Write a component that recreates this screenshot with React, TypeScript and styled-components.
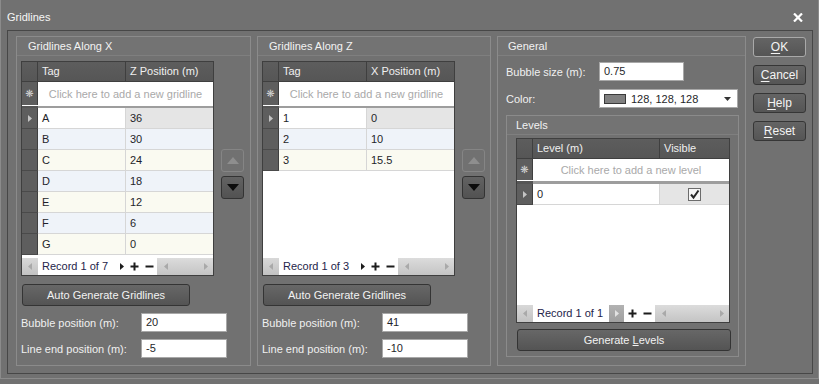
import React from 'react';
import styled, { createGlobalStyle } from 'styled-components';

const GlobalStyle = createGlobalStyle`
  html, body {
    margin: 0;
    padding: 0;
    background: #717171;
  }
  body {
    font-family: "Liberation Sans", Arial, sans-serif;
    font-size: 11px;
    color: #f2f2f2;
  }
`;

const bg = '#717171';
const lightLine = '#8b8b8b';
const darkLine = '#3f3f3f';
const cellLine = '#d6d6d6';
const cellText = '#1f1f2a';

const Window = styled.div`
  width: 819px;
  height: 379px;
  box-sizing: border-box;
  border: 1px solid ${lightLine};
  border-top: none;
  background: ${bg};
  display: flex;
  flex-direction: column;
`;

const TitleBar = styled.div`
  height: 30px;
  display: flex;
  align-items: center;
  justify-content: space-between;
  padding: 0 15px 0 6px;
  flex: none;
`;

const Title = styled.span`
  font-size: 11px;
  color: #f6f6f6;
  margin-top: 3px;
`;

const CloseWrap = styled.div`
  margin-top: 4px;
  display: flex;
`;

const Frame = styled.div`
  margin-left: 6px;
  width: 806px;
  height: 344px;
  box-sizing: border-box;
  border: 1px solid #474747;
  padding: 5px 0 0 8px;
  display: flex;
  align-items: flex-start;
`;

const Panel = styled.div<{ $width: number; $height: number; $gap?: number }>`
  width: ${(p) => p.$width}px;
  height: ${(p) => p.$height}px;
  margin-right: ${(p) => p.$gap ?? 0}px;
  box-sizing: border-box;
  border: 1px solid ${lightLine};
  display: flex;
  flex-direction: column;
  flex: none;
`;

const PanelHeader = styled.div<{ $pad?: number }>`
  height: 18px;
  line-height: 18px;
  padding-left: ${(p) => p.$pad ?? 11}px;
  border-bottom: 1px solid #7f7f7f;
  background: #737373;
  color: #f2f2f2;
  flex: none;
`;

const PanelBody = styled.div<{ $pad: string }>`
  padding: ${(p) => p.$pad};
  display: flex;
  flex-direction: column;
  align-items: flex-start;
`;

const GridArea = styled.div`
  display: flex;
  align-items: flex-start;
  gap: 7px;
`;

const MoveColumn = styled.div`
  margin-top: 88px;
  display: flex;
  flex-direction: column;
  gap: 4px;
`;

const MoveButton = styled.div<{ $enabled?: boolean }>`
  width: 23px;
  height: 23px;
  box-sizing: border-box;
  border-radius: 3px;
  border: 1px solid ${(p) => (p.$enabled ? '#333' : '#858585')};
  background: ${(p) => (p.$enabled ? 'linear-gradient(#626262, #525252)' : bg)};
  display: flex;
  align-items: center;
  justify-content: center;
`;

const GridBox = styled.div<{ $width: number; $height: number }>`
  width: ${(p) => p.$width}px;
  height: ${(p) => p.$height}px;
  box-sizing: border-box;
  border: 1px solid ${darkLine};
  display: flex;
  flex-direction: column;
  background: #fff;
  flex: none;
`;

const GridHeader = styled.div`
  height: 19px;
  display: flex;
  background: linear-gradient(#5d5d5d, #565656);
  border-bottom: 1px solid ${darkLine};
  flex: none;
`;

const HeaderCell = styled.div<{ $width?: number }>`
  ${(p) => (p.$width ? `width: ${p.$width}px; flex: none;` : 'flex: 1;')}
  box-sizing: border-box;
  border-right: 1px solid ${darkLine};
  padding-left: 4px;
  line-height: 19px;
  color: #f0f0f0;
  white-space: nowrap;
  &:last-child {
    border-right: none;
  }
`;

const Row = styled.div<{ $height: number; $line?: string }>`
  height: ${(p) => p.$height}px;
  display: flex;
  flex: none;
  box-sizing: border-box;
  border-bottom: 1px solid ${(p) => p.$line ?? cellLine};
`;

const Selector = styled.div`
  width: 16px;
  flex: none;
  box-sizing: border-box;
  background: #5e5e5e;
  border-right: 1px solid ${darkLine};
  display: flex;
  align-items: center;
  justify-content: center;
  color: #d4d4d4;
  font-family: "DejaVu Sans", sans-serif;
  font-size: 10px;
`;

const SelectorWrap = styled.div`
  width: 16px;
  flex: none;
  margin-bottom: -1px;
  display: flex;
  border-bottom: 1px solid #4a4a4a;
`;

const Cell = styled.div<{ $width?: number; $tone: string }>`
  ${(p) => (p.$width ? `width: ${p.$width}px; flex: none;` : 'flex: 1;')}
  box-sizing: border-box;
  background: ${(p) => p.$tone};
  border-right: 1px solid ${cellLine};
  padding-left: 4px;
  line-height: 20px;
  color: ${cellText};
  display: flex;
  align-items: center;
  &:last-child {
    border-right: none;
  }
`;

const CenterCell = styled(Cell)`
  justify-content: center;
  padding-left: 0;
`;

const Placeholder = styled.div`
  flex: 1;
  text-align: center;
  color: #a9a9a9;
  background: #fff;
  display: flex;
  align-items: center;
  justify-content: center;
`;

const Separator = styled.div<{ $height: number }>`
  height: ${(p) => p.$height}px;
  background: #9d9d9d;
  flex: none;
  display: flex;
`;

const SeparatorSelector = styled.div`
  width: 16px;
  background: #555;
`;

const Filler = styled.div`
  flex: 1;
  background: #fff;
`;

const NavBar = styled.div`
  height: 17px;
  display: flex;
  align-items: stretch;
  background: #fff;
  flex: none;
`;

const NavEdge = styled.div`
  width: 16px;
  flex: none;
  background: linear-gradient(#d8d8d8, #c2c2c2);
  display: flex;
  align-items: center;
  justify-content: center;
`;

const NavText = styled.div`
  padding-left: 4px;
  line-height: 17px;
  color: #24244a;
  white-space: nowrap;
`;

const NavButton = styled.div<{ $boxed?: boolean; $left: number; $width: number }>`
  margin-left: ${(p) => p.$left}px;
  width: ${(p) => p.$width}px;
  flex: none;
  background: ${(p) => (p.$boxed ? 'linear-gradient(#b2b2b2, #a0a0a0)' : 'transparent')};
  display: flex;
  align-items: center;
  justify-content: center;
`;

const NavScroll = styled.div<{ $left: number }>`
  margin-left: ${(p) => p.$left}px;
  flex: 1;
  background: linear-gradient(#dcdcdc, #c4c4c4);
  display: flex;
  align-items: center;
  justify-content: space-between;
  padding: 0 5px 0 7px;
`;

const ActionButton = styled.div<{ $width: number; $top: number }>`
  margin-top: ${(p) => p.$top}px;
  margin-left: 1px;
  width: ${(p) => p.$width}px;
  height: 22px;
  box-sizing: border-box;
  border: 1px solid #343434;
  border-radius: 3px;
  background: linear-gradient(#676767, #545454);
  color: #f2f2f2;
  display: flex;
  align-items: center;
  justify-content: center;
`;

const FieldRow = styled.div<{ $top: number; $labelWidth: number }>`
  margin-top: ${(p) => p.$top}px;
  display: flex;
  align-items: center;
  & > label {
    width: ${(p) => p.$labelWidth}px;
    flex: none;
    color: #f0f0f0;
  }
`;

const TextInput = styled.div<{ $width: number }>`
  width: ${(p) => p.$width}px;
  height: 19px;
  box-sizing: border-box;
  border: 1px solid #a8a8a8;
  background: #fff;
  color: ${cellText};
  padding-left: 4px;
  line-height: 17px;
`;

const ColorSelect = styled.div`
  width: 139px;
  height: 19px;
  box-sizing: border-box;
  border: 1px solid #a8a8a8;
  background: #fff;
  color: ${cellText};
  display: flex;
  align-items: center;
  padding: 0 6px 0 4px;
  gap: 5px;
`;

const Swatch = styled.div`
  width: 22px;
  height: 10px;
  box-sizing: border-box;
  border: 1px solid #3a3a3a;
  background: #808080;
  flex: none;
`;

const SelectText = styled.span`
  flex: 1;
`;

const SubPanel = styled.div`
  margin-top: 7px;
  width: 233px;
  height: 242px;
  box-sizing: border-box;
  border: 1px solid ${lightLine};
  display: flex;
  flex-direction: column;
`;

const SideButtons = styled.div`
  margin: 1px 0 0 7px;
  display: flex;
  flex-direction: column;
  gap: 8px;
`;

const SideButton = styled.div<{ $default?: boolean }>`
  width: 53px;
  height: 20px;
  box-sizing: border-box;
  border: 1px solid ${(p) => (p.$default ? '#a9a9a9' : '#363636')};
  border-radius: 3px;
  background: linear-gradient(#646464, #555);
  color: #f4f4f4;
  display: flex;
  align-items: center;
  justify-content: center;
  font-size: 12px;
  & u {
    text-decoration-thickness: 1px;
    text-underline-offset: 2px;
  }
`;

const CheckBox = styled.div`
  width: 13px;
  height: 13px;
  box-sizing: border-box;
  border: 1px solid #6c6c6c;
  background: #f6f6f6;
  display: flex;
  align-items: center;
  justify-content: center;
`;

const Tri: React.FC<{ dir: 'left' | 'right' | 'up' | 'down'; w: number; h: number; fill: string }> = ({
  dir,
  w,
  h,
  fill,
}) => {
  const pts = {
    left: `${w},0 ${w},${h} 0,${h / 2}`,
    right: `0,0 0,${h} ${w},${h / 2}`,
    up: `0,${h} ${w},${h} ${w / 2},0`,
    down: `0,0 ${w},0 ${w / 2},${h}`,
  }[dir];
  return (
    <svg width={w} height={h} viewBox={`0 0 ${w} ${h}`}>
      <polygon points={pts} fill={fill} />
    </svg>
  );
};

const PlusIcon = () => (
  <svg width="9" height="9" viewBox="0 0 9 9">
    <rect x="3.5" y="0.5" width="2" height="8" fill="#1c1c1c" />
    <rect x="0.5" y="3.5" width="8" height="2" fill="#1c1c1c" />
  </svg>
);

const MinusIcon = () => (
  <svg width="9" height="9" viewBox="0 0 9 9">
    <rect x="0.5" y="3.5" width="8" height="2" fill="#1c1c1c" />
  </svg>
);

const CloseIcon = () => (
  <svg width="10" height="9" viewBox="0 0 10 9">
    <path d="M1 0.5 L9 8.5 M9 0.5 L1 8.5" stroke="#fff" strokeWidth="2.2" />
  </svg>
);

const CheckMark = () => (
  <svg width="11" height="11" viewBox="0 0 11 11">
    <path d="M2 5.5 L4.5 8.5 L9.5 1.5" stroke="#262626" strokeWidth="2" fill="none" />
  </svg>
);

interface Column {
  title: string;
  width?: number;
}

interface GridProps {
  width: number;
  height: number;
  columns: Column[];
  rows: React.ReactNode[][];
  placeholder: string;
  newRowHeight: number;
  gapHeight: number;
  record: string;
  boxedNext?: boolean;
  centerLast?: boolean;
}

const rowTone = (row: number, col: number) => {
  if (row === 0) return col === 0 ? '#ffffff' : '#e5e5e5';
  return row % 2 === 1 ? '#eff3f9' : '#fafaf1';
};

const DataGrid: React.FC<GridProps> = ({
  width,
  height,
  columns,
  rows,
  placeholder,
  newRowHeight,
  gapHeight,
  record,
  boxedNext,
  centerLast,
}) => (
  <GridBox $width={width} $height={height}>
    <GridHeader>
      <HeaderCell $width={16} />
      {columns.map((c) => (
        <HeaderCell key={c.title} $width={c.width}>
          {c.title}
        </HeaderCell>
      ))}
    </GridHeader>
    <Row $height={newRowHeight} $line="#fff">
      <Selector>❋</Selector>
      <Placeholder>{placeholder}</Placeholder>
    </Row>
    <Separator $height={gapHeight}>
      <SeparatorSelector />
    </Separator>
    {rows.map((r, i) => (
      <Row key={i} $height={21}>
        <SelectorWrap>
          <Selector>{i === 0 && <Tri dir="right" w={4} h={7} fill="#c4c4c4" />}</Selector>
        </SelectorWrap>
        {r.map((v, j) => {
          const last = j === r.length - 1;
          const C = centerLast && last ? CenterCell : Cell;
          return (
            <C key={j} $width={columns[j].width} $tone={rowTone(i, j)}>
              {v}
            </C>
          );
        })}
      </Row>
    ))}
    <Filler />
    <NavBar>
      <NavEdge>
        <Tri dir="left" w={4} h={7} fill="#a9a9a9" />
      </NavEdge>
      <NavText>{record}</NavText>
      {boxedNext ? (
        <NavButton $boxed $left={6} $width={15}>
          <Tri dir="right" w={4} h={7} fill="#e2e2e2" />
        </NavButton>
      ) : (
        <NavButton $left={11} $width={6}>
          <Tri dir="right" w={4} h={7} fill="#1c1c1c" />
        </NavButton>
      )}
      <NavButton $left={boxedNext ? 4 : 5} $width={9}>
        <PlusIcon />
      </NavButton>
      <NavButton $left={6} $width={9}>
        <MinusIcon />
      </NavButton>
      <NavScroll $left={3}>
        <Tri dir="left" w={4} h={7} fill="#a9a9a9" />
        <Tri dir="right" w={4} h={7} fill="#a9a9a9" />
      </NavScroll>
    </NavBar>
  </GridBox>
);

interface GridlinePanelProps {
  title: string;
  posTitle: string;
  rows: string[][];
  record: string;
  bubble: string;
  lineEnd: string;
  gap: number;
  width: number;
}

const GridlinePanel: React.FC<GridlinePanelProps> = ({ title, posTitle, rows, record, bubble, lineEnd, gap, width }) => (
  <Panel $width={width} $height={330} $gap={gap}>
    <PanelHeader>{title}</PanelHeader>
    <PanelBody $pad="5px 0 0 4px">
      <GridArea>
        <DataGrid
          width={193}
          height={215}
          columns={[{ title: 'Tag', width: 88 }, { title: posTitle }]}
          rows={rows}
          placeholder="Click here to add a new gridline"
          newRowHeight={24}
          gapHeight={2}
          record={record}
        />
        <MoveColumn>
          <MoveButton>
            <Tri dir="up" w={12} h={7} fill="#8e8e8e" />
          </MoveButton>
          <MoveButton $enabled>
            <Tri dir="down" w={12} h={7} fill="#0c0c0c" />
          </MoveButton>
        </MoveColumn>
      </GridArea>
      <ActionButton $width={168} $top={8}>
        Auto Generate Gridlines
      </ActionButton>
      <FieldRow $top={7} $labelWidth={120}>
        <label>Bubble position (m):</label>
        <TextInput $width={86}>{bubble}</TextInput>
      </FieldRow>
      <FieldRow $top={7} $labelWidth={120}>
        <label>Line end position (m):</label>
        <TextInput $width={86}>{lineEnd}</TextInput>
      </FieldRow>
    </PanelBody>
  </Panel>
);

const App: React.FC = () => (
  <>
    <GlobalStyle />
    <Window>
      <TitleBar>
        <Title>Gridlines</Title>
        <CloseWrap>
          <CloseIcon />
        </CloseWrap>
      </TitleBar>
      <Frame>
        <GridlinePanel
          title="Gridlines Along X"
          posTitle="Z Position (m)"
          rows={[
            ['A', '36'],
            ['B', '30'],
            ['C', '24'],
            ['D', '18'],
            ['E', '12'],
            ['F', '6'],
            ['G', '0'],
          ]}
          record="Record 1 of 7"
          bubble="20"
          lineEnd="-5"
          gap={6}
          width={235}
        />
        <GridlinePanel
          title="Gridlines Along Z"
          posTitle="X Position (m)"
          rows={[
            ['1', '0'],
            ['2', '10'],
            ['3', '15.5'],
          ]}
          record="Record 1 of 3"
          bubble="41"
          lineEnd="-10"
          gap={6}
          width={234}
        />
        <Panel $width={249} $height={330}>
          <PanelHeader $pad={10}>General</PanelHeader>
          <PanelBody $pad="6px 0 0 8px">
            <FieldRow $top={0} $labelWidth={93}>
              <label>Bubble size (m):</label>
              <TextInput $width={85}>0.75</TextInput>
            </FieldRow>
            <FieldRow $top={8} $labelWidth={93}>
              <label>Color:</label>
              <ColorSelect>
                <Swatch />
                <SelectText>128, 128, 128</SelectText>
                <Tri dir="down" w={7} h={4} fill="#333" />
              </ColorSelect>
            </FieldRow>
            <SubPanel>
              <PanelHeader $pad={9}>Levels</PanelHeader>
              <PanelBody $pad="3px 0 0 9px">
                <DataGrid
                  width={214}
                  height={185}
                  columns={[{ title: 'Level (m)', width: 127 }, { title: 'Visible' }]}
                  rows={[
                    [
                      '0',
                      <CheckBox key="c">
                        <CheckMark />
                      </CheckBox>,
                    ],
                  ]}
                  placeholder="Click here to add a new level"
                  newRowHeight={22}
                  gapHeight={3}
                  record="Record 1 of 1"
                  boxedNext
                  centerLast
                />
                <ActionButton $width={214} $top={6}>
                  <span>
                    Generate <u>L</u>evels
                  </span>
                </ActionButton>
              </PanelBody>
            </SubPanel>
          </PanelBody>
        </Panel>
        <SideButtons>
          <SideButton $default>
            <span>
              <u>O</u>K
            </span>
          </SideButton>
          <SideButton>
            <span>
              <u>C</u>ancel
            </span>
          </SideButton>
          <SideButton>
            <span>
              <u>H</u>elp
            </span>
          </SideButton>
          <SideButton>
            <span>
              <u>R</u>eset
            </span>
          </SideButton>
        </SideButtons>
      </Frame>
    </Window>
  </>
);

export default App;
